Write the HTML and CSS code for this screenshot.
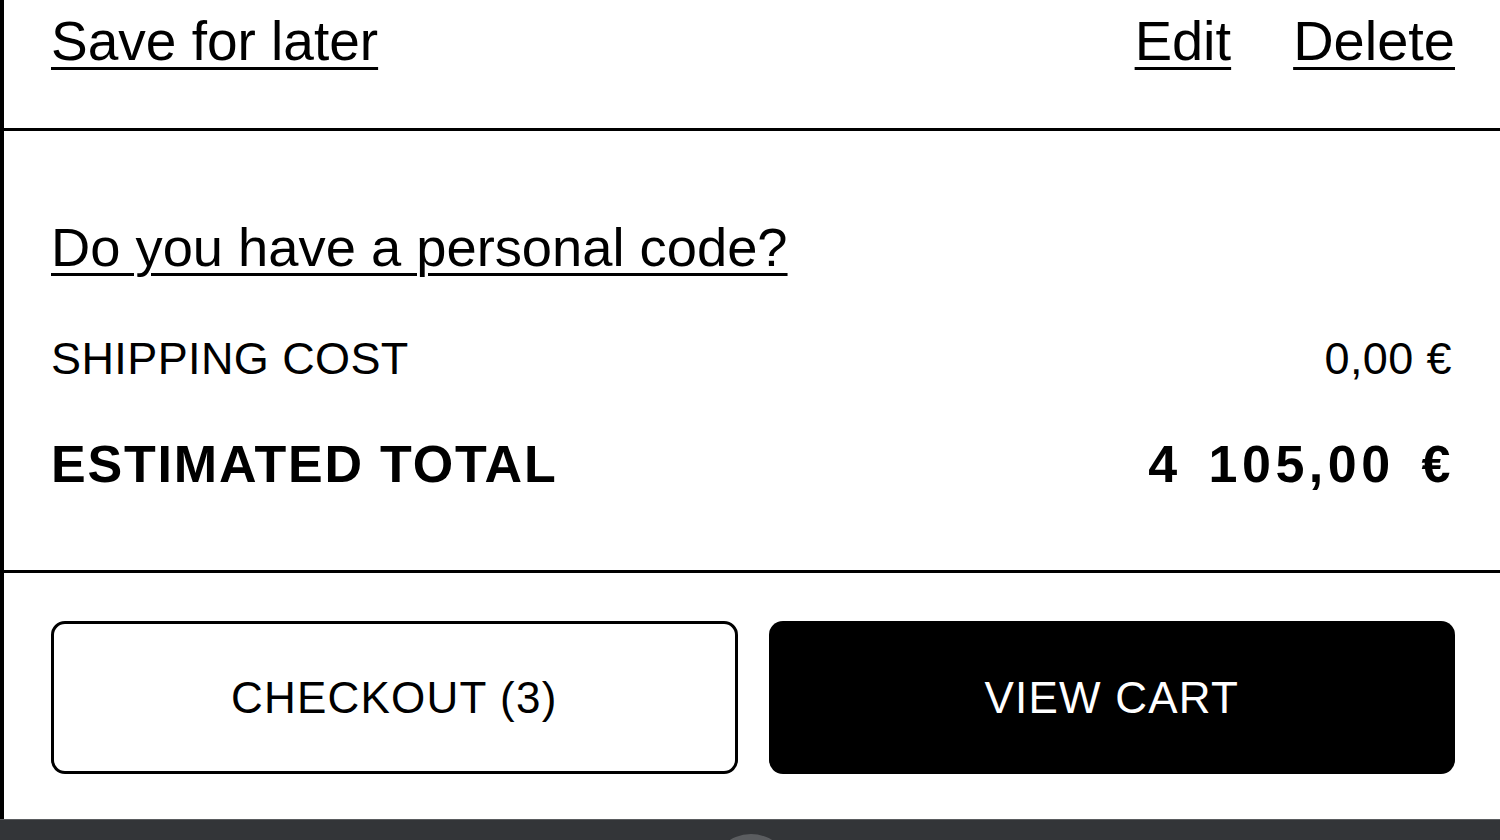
FILE: index.html
```html
<!DOCTYPE html>
<html lang="en">
<head>
<meta charset="utf-8">
<title>Cart</title>
<link rel="stylesheet" href="styles.css">
</head>
<body>
<div class="panel">
  <section class="item-actions">
    <a class="link" href="#">Save for later</a>
    <div class="right-actions">
      <a class="link" href="#">Edit</a>
      <a class="link" href="#">Delete</a>
    </div>
  </section>
  <section class="summary">
    <a class="link code-link" href="#">Do you have a personal code?</a>
    <div class="row shipping">
      <span>SHIPPING COST</span>
      <span>0,00 €</span>
    </div>
    <div class="row total">
      <span>ESTIMATED TOTAL</span>
      <span class="amount">4 105,00 €</span>
    </div>
  </section>
  <section class="buttons">
    <button class="btn btn-outline">CHECKOUT (3)</button>
    <button class="btn btn-solid">VIEW CART</button>
  </section>
</div>
<div class="bottom-bar"><span class="handle"></span></div>
</body>
</html>
```
FILE: styles.css
```css
* { box-sizing: border-box; }
html, body { margin: 0; padding: 0; background: #fff; }
body {
  font-family: "Liberation Sans", Arial, sans-serif;
  color: #000;
  width: 1500px;
  height: 840px;
  overflow: hidden;
}
.panel {
  border-left: 4px solid #000;
  height: 819px;
}
.link {
  color: #000;
  text-decoration: underline;
  text-decoration-thickness: 3px;
  text-underline-offset: 7px;
}
.item-actions {
  display: flex;
  justify-content: space-between;
  align-items: flex-start;
  padding: 9px 45px 0 47px;
  height: 131px;
  border-bottom: 3px solid #000;
  font-size: 55px;
  line-height: 64px;
}
.right-actions {
  display: flex;
  gap: 62px;
}
.right-actions .link {
  font-size: 56px;
}
.summary {
  padding: 85px 48px 0 47px;
  height: 442px;
  border-bottom: 3px solid #000;
  display: flex;
  flex-direction: column;
}
.code-link {
  font-size: 54.3px;
  line-height: 64px;
  align-self: flex-start;
}
.row {
  display: flex;
  justify-content: space-between;
  align-items: baseline;
}
.shipping {
  margin-top: 53px;
  font-size: 45px;
  line-height: 52px;
  letter-spacing: 0.4px;
}
.total {
  margin-top: 49px;
  font-size: 52px;
  line-height: 60px;
  font-weight: bold;
  letter-spacing: 1.8px;
}
.total .amount {
  letter-spacing: 4.5px;
  word-spacing: 8px;
  margin-right: -3px;
}
.buttons {
  display: grid;
  grid-template-columns: 1fr 1fr;
  gap: 31px;
  padding: 48px 45px 0 47px;
}
.btn {
  height: 153px;
  border-radius: 14px;
  font-family: "Liberation Sans", Arial, sans-serif;
  font-size: 44px;
  letter-spacing: 1.2px;
  cursor: pointer;
}
.btn-outline {
  background: #fff;
  color: #000;
  border: 3px solid #000;
}
.btn-solid {
  background: #000;
  color: #fff;
  border: 0;
}
.bottom-bar {
  position: relative;
  height: 21px;
  background: #333538;
  border-top: 1px solid #5a5c5f;
  overflow: hidden;
}
.handle {
  position: absolute;
  left: 711px;
  top: 14px;
  width: 80px;
  height: 80px;
  border-radius: 50%;
  background: #5b5d60;
}
```
